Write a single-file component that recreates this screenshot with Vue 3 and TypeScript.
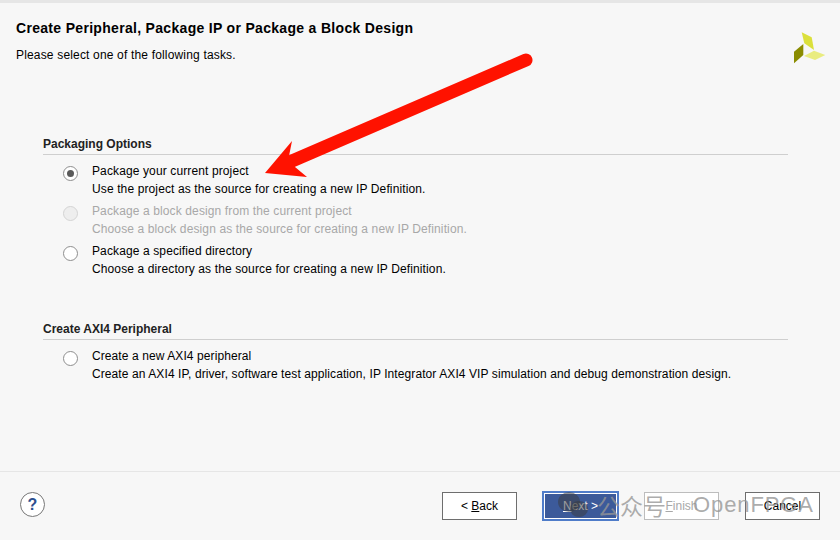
<script setup lang="ts">
interface Option {
  title: string
  desc: string
  checked?: boolean
  disabled?: boolean
}

const packagingOptions: Option[] = [
  {
    title: 'Package your current project',
    desc: 'Use the project as the source for creating a new IP Definition.',
    checked: true,
  },
  {
    title: 'Package a block design from the current project',
    desc: 'Choose a block design as the source for creating a new IP Definition.',
    disabled: true,
  },
  {
    title: 'Package a specified directory',
    desc: 'Choose a directory as the source for creating a new IP Definition.',
  },
]

const axiOptions: Option[] = [
  {
    title: 'Create a new AXI4 peripheral',
    desc: 'Create an AXI4 IP, driver, software test application, IP Integrator AXI4 VIP simulation and debug demonstration design.',
  },
]

const groups = [
  { name: 'Packaging Options', options: packagingOptions },
  { name: 'Create AXI4 Peripheral', options: axiOptions },
]
</script>

<template>
  <div class="wizard">
    <header class="head">
      <div>
        <h1 class="title">Create Peripheral, Package IP or Package a Block Design</h1>
        <p class="subtitle">Please select one of the following tasks.</p>
      </div>
      <svg class="logo" width="32" height="32" viewBox="794 32 32 32">
        <polygon points="801.7,32.3 811.7,37.3 814,50 804.3,43.3" fill="#dbe03c" />
        <polygon points="794,51.7 803.3,44 803.3,55 794,63.3" fill="#8a8c00" />
        <polygon points="804,56 814,50.7 825.3,55 815,60" fill="#e9ec80" />
      </svg>
    </header>

    <main class="body">
      <section v-for="group in groups" :key="group.name" class="group">
        <h2 class="group-name">{{ group.name }}</h2>
        <div class="options">
          <div
            v-for="opt in group.options"
            :key="opt.title"
            class="option"
            :class="{ disabled: opt.disabled }"
          >
            <span class="radio" :class="{ checked: opt.checked }"></span>
            <div class="option-text">
              <div>{{ opt.title }}</div>
              <div>{{ opt.desc }}</div>
            </div>
          </div>
        </div>
      </section>
    </main>

    <footer class="foot">
      <button class="help" type="button">?</button>
      <div class="buttons">
        <button class="btn" type="button">&lt; <u>B</u>ack</button>
        <button class="btn primary" type="button"><u>N</u>ext &gt;</button>
        <button class="btn muted" type="button"><u>F</u>inish</button>
        <button class="btn cancel" type="button">Cancel</button>
      </div>
    </footer>

    <!-- annotation drawn over the dialog -->
    <svg class="arrow" width="840" height="540" viewBox="0 0 840 540">
      <line x1="526" y1="60" x2="292" y2="161" stroke="#ff1200" stroke-width="13" stroke-linecap="round" />
      <polygon points="265,173 292,141 289,156 295,167 307,177" fill="#ff1200" />
    </svg>

    <!-- watermark -->
    <div class="watermark">
      <svg width="36" height="30" viewBox="0 0 36 30">
        <ellipse cx="13" cy="12" rx="11" ry="10" fill="#3a3a3a" fill-opacity="0.5" />
        <ellipse cx="23" cy="19" rx="9" ry="8" fill="#3a3a3a" fill-opacity="0.5" />
      </svg>
      <span class="wm-cn">公众号</span>
      <span class="wm-en">OpenFPGA</span>
    </div>
  </div>
</template>

<style>
html,
body {
  margin: 0;
  background: #f7f7f7;
}
</style>

<style scoped>
.wizard {
  position: relative;
  width: 840px;
  height: 540px;
  box-sizing: border-box;
  border-top: 3px solid #e6e6e6;
  background: #f7f7f7;
  display: flex;
  flex-direction: column;
  overflow: hidden;
  font-family: "Liberation Sans", Arial, sans-serif;
  font-size: 12px;
  color: #000;
}

.head {
  height: 131px;
  box-sizing: border-box;
  padding: 17px 14px 0 16px;
  display: flex;
  justify-content: space-between;
  align-items: flex-start;
}

.title {
  margin: 0;
  font-size: 14px;
  line-height: 16px;
  font-weight: 700;
  letter-spacing: 0.31px;
}

.subtitle {
  margin: 12px 0 0;
  line-height: 14px;
  letter-spacing: 0.17px;
}

.logo {
  margin-top: 12px;
}

.body {
  flex: 1;
  padding: 0 52px 0 43px;
}

.group {
  margin-bottom: 37px;
}

.group-name {
  margin: 0;
  font-size: 12px;
  line-height: 21px;
  height: 20px;
  font-weight: 700;
  color: #222;
  border-bottom: 1px solid #cfcfcf;
}

.options {
  padding: 7px 0 0 20px;
}

.option {
  display: flex;
  align-items: flex-start;
  gap: 14px;
  height: 40px;
}

.option-text {
  line-height: 18px;
  letter-spacing: 0.12px;
}

.group + .group .option-text {
  letter-spacing: 0.09px;
}

.option.disabled .option-text {
  color: #a8a8a8;
}

.radio {
  width: 15px;
  height: 15px;
  margin-top: 4px;
  box-sizing: border-box;
  border-radius: 50%;
  border: 1.5px solid #8e8e8e;
  background: #fff;
  display: flex;
  align-items: center;
  justify-content: center;
}

.radio.checked::after {
  content: "";
  width: 7px;
  height: 7px;
  border-radius: 50%;
  background: #5a5a5a;
}

.option.disabled .radio {
  background: #eeeeee;
  border-color: #d4d4d4;
}

.foot {
  height: 69px;
  box-sizing: border-box;
  border-top: 1px solid #e6e6e6;
  padding: 20px 20px 0;
  display: flex;
  justify-content: space-between;
  align-items: flex-start;
}

.help {
  width: 25px;
  height: 25px;
  padding: 0;
  border-radius: 50%;
  border: 1px solid #777;
  background: #fff;
  color: #2c4f8f;
  font-family: inherit;
  font-size: 16px;
  font-weight: 700;
}

.buttons {
  display: flex;
  gap: 26px;
}

.btn {
  width: 75px;
  height: 28px;
  padding: 0;
  box-sizing: border-box;
  border: 1px solid #6e6e6e;
  background: #fff;
  font-family: inherit;
  font-size: 12px;
  color: #000;
}

.btn.primary {
  background: #3c5a9a;
  color: #fff;
  border-color: #4f7cc9;
  box-shadow: 0 0 0 1px #4f7cc9, inset 0 0 0 1px #fff;
}

.btn.muted {
  border-color: #bdbdbd;
  color: #a8a8a8;
}

.arrow {
  position: absolute;
  left: 0;
  top: -3px;
  pointer-events: none;
}

.watermark {
  position: absolute;
  left: 556px;
  top: 487px;
  display: flex;
  align-items: center;
  color: rgba(150, 150, 150, 0.8);
  pointer-events: none;
}

.wm-cn {
  margin-left: 5px;
  font-family: "Noto Sans CJK SC", sans-serif;
  font-size: 23px;
  line-height: 30px;
}

.wm-en {
  margin-left: 27px;
  font-family: "Liberation Sans", sans-serif;
  font-size: 22px;
  line-height: 30px;
  letter-spacing: 0.9px;
}
</style>
